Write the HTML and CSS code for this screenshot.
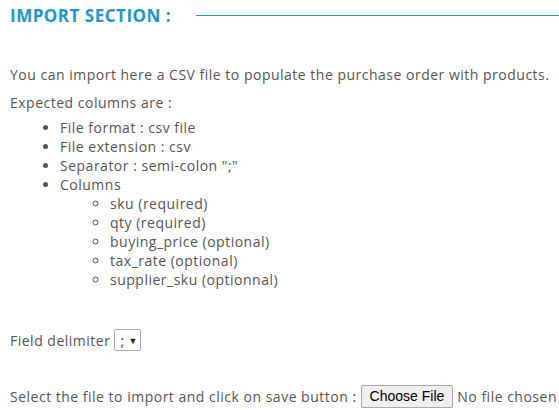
FILE: index.html
```html
<!DOCTYPE html>
<html>
<head>
<meta charset="utf-8">
<link rel="stylesheet" href="styles.css">
</head>
<body>
<div class="page">
  <div class="section-head">
    <h2 class="title">IMPORT SECTION :</h2>
    <div class="rule"></div>
  </div>
  <p class="intro">You can import here a CSV file to populate the purchase order with products.</p>
  <p class="expected">Expected columns are :</p>
  <ul class="list">
    <li>File format : csv file</li>
    <li>File extension : csv</li>
    <li>Separator : semi-colon ";"</li>
    <li>Columns
      <ul class="sublist">
        <li>sku (required)</li>
        <li>qty (required)</li>
        <li>buying_price (optional)</li>
        <li>tax_rate (optional)</li>
        <li>supplier_sku (optionnal)</li>
      </ul>
    </li>
  </ul>
  <div class="field-row">
    <span>Field delimiter</span>
    <span class="select"><span class="sel-val">;</span><span class="caret">▼</span></span>
  </div>
  <div class="file-row">
    <span>Select the file to import and click on save button :</span>
    <span class="btn">Choose File</span>
    <span class="nofile">No file chosen</span>
  </div>
</div>
</body>
</html>
```
FILE: styles.css
```css
html, body {
  margin: 0;
  padding: 0;
  background: #fff;
}
.page {
  padding: 0 0 0 10px;
  font-family: "Open Sans", "Liberation Sans", sans-serif;
  font-size: 14px;
  letter-spacing: 0.5px;
  color: #555;
  width: 549px;
  overflow: hidden;
}
.section-head {
  display: flex;
  align-items: center;
  height: 31px;
}
.title {
  margin: 0;
  font-size: 17px;
  font-weight: 700;
  letter-spacing: 0.5px;
  color: #1a96d4;
  white-space: nowrap;
}
.rule {
  flex: 1;
  height: 1px;
  background: #1a96d4;
  margin-left: 25px;
}
.intro {
  margin: 34px 0 0;
  line-height: 19px;
  white-space: nowrap;
}
.expected {
  margin: 9px 0 0;
  line-height: 19px;
}
.list {
  margin: 6px 0 0;
  padding-left: 50px;
  line-height: 19px;
  list-style: disc;
}
.sublist {
  margin: 0;
  padding-left: 50px;
  list-style: circle;
}
.field-row {
  margin-top: 40px;
  display: flex;
  align-items: center;
  gap: 4px;
  height: 22px;
}
.select {
  display: inline-flex;
  align-items: center;
  box-sizing: border-box;
  border: 1px solid #aaa;
  border-radius: 2px;
  height: 22px;
  width: 27px;
  padding: 0 3px 0 5px;
  justify-content: space-between;
  color: #444;
  font-size: 14px;
  letter-spacing: 0;
}
.caret {
  font-size: 9px;
  color: #222;
}
.file-row {
  margin-top: 33px;
  display: flex;
  align-items: center;
  height: 24px;
  white-space: nowrap;
}
.btn {
  margin-left: 4px;
  box-sizing: border-box;
  font-family: "Liberation Sans", Arial, sans-serif;
  font-size: 14px;
  letter-spacing: 0;
  color: #000;
  background: #efefef;
  border: 1px solid #aaa;
  border-radius: 2px;
  padding: 0 8px;
  height: 23px;
  line-height: 21px;
}
.nofile {
  margin-left: 4px;
}
```
